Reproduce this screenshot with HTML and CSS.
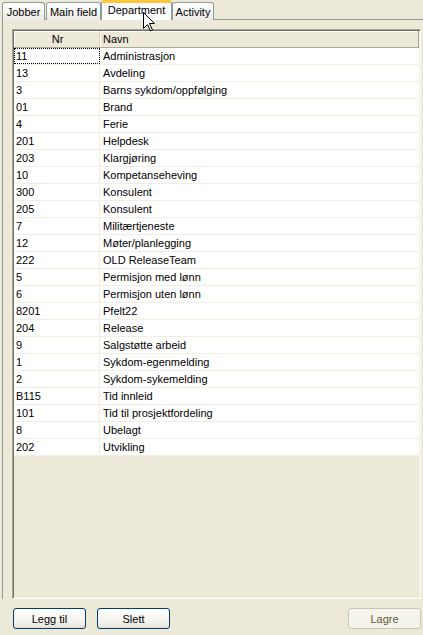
FILE: index.html
```html
<!DOCTYPE html>
<html>
<head>
<meta charset="utf-8">
<link rel="stylesheet" href="styles.css">
</head>
<body>
<div class="page">
  <div class="tabs">
    <div class="tab w-jobber">Jobber</div>
    <div class="tab w-main">Main field</div>
    <div class="tab active w-dept">Department</div>
    <div class="tab w-act">Activity</div>
  </div>
  <div class="panel">
    <div class="grid">
      <div class="row head">
        <div class="c1 hc">Nr</div>
        <div class="c2 hc">Navn</div>
      </div>
      <div class="row"><div class="c1 focus">11</div><div class="c2">Administrasjon</div></div>
      <div class="row"><div class="c1">13</div><div class="c2">Avdeling</div></div>
      <div class="row"><div class="c1">3</div><div class="c2">Barns sykdom/oppfølging</div></div>
      <div class="row"><div class="c1">01</div><div class="c2">Brand</div></div>
      <div class="row"><div class="c1">4</div><div class="c2">Ferie</div></div>
      <div class="row"><div class="c1">201</div><div class="c2">Helpdesk</div></div>
      <div class="row"><div class="c1">203</div><div class="c2">Klargjøring</div></div>
      <div class="row"><div class="c1">10</div><div class="c2">Kompetanseheving</div></div>
      <div class="row"><div class="c1">300</div><div class="c2">Konsulent</div></div>
      <div class="row"><div class="c1">205</div><div class="c2">Konsulent</div></div>
      <div class="row"><div class="c1">7</div><div class="c2">Militærtjeneste</div></div>
      <div class="row"><div class="c1">12</div><div class="c2">Møter/planlegging</div></div>
      <div class="row"><div class="c1">222</div><div class="c2">OLD ReleaseTeam</div></div>
      <div class="row"><div class="c1">5</div><div class="c2">Permisjon med lønn</div></div>
      <div class="row"><div class="c1">6</div><div class="c2">Permisjon uten lønn</div></div>
      <div class="row"><div class="c1">8201</div><div class="c2">Pfelt22</div></div>
      <div class="row"><div class="c1">204</div><div class="c2">Release</div></div>
      <div class="row"><div class="c1">9</div><div class="c2">Salgstøtte arbeid</div></div>
      <div class="row"><div class="c1">1</div><div class="c2">Sykdom-egenmelding</div></div>
      <div class="row"><div class="c1">2</div><div class="c2">Sykdom-sykemelding</div></div>
      <div class="row"><div class="c1">B115</div><div class="c2">Tid innleid</div></div>
      <div class="row"><div class="c1">101</div><div class="c2">Tid til prosjektfordeling</div></div>
      <div class="row"><div class="c1">8</div><div class="c2">Ubelagt</div></div>
      <div class="row"><div class="c1">202</div><div class="c2">Utvikling</div></div>
    </div>
  </div>
  <div class="buttons">
    <button class="btn">Legg til</button>
    <button class="btn">Slett</button>
    <span class="spacer"></span>
    <button class="btn disabled">Lagre</button>
  </div>
  <svg class="cursor" width="13" height="20" viewBox="0 0 13 20">
    <path d="M0.5 0.5 L0.5 16.5 L4.5 12.5 L7.5 19 L9.5 18 L6.5 11.5 L11.5 11.5 Z" fill="#fff" stroke="#000" stroke-width="1"/>
  </svg>
</div>
</body>
</html>
```
FILE: styles.css
```css
html, body {
  margin: 0;
  padding: 0;
  background: #ECE9D8;
  font-family: "Liberation Sans", Arial, sans-serif;
  font-size: 11px;
  color: #000;
}
.page {
  position: relative;
  width: 423px;
  height: 635px;
  overflow: hidden;
}
.tabs {
  display: flex;
  align-items: flex-end;
  height: 20px;
  padding-left: 2px;
  position: relative;
  z-index: 2;
}
.tab {
  box-sizing: border-box;
  height: 18px;
  border: 1px solid #919B9C;
  border-bottom: none;
  border-radius: 3px 3px 0 0;
  background: linear-gradient(#FFFFFF, #ECEBE6);
  display: flex;
  align-items: center;
  justify-content: center;
  margin-right: 1px;
  padding-top: 0;
}
.w-jobber { width: 43px; }
.w-main { width: 55px; }
.w-dept { width: 71px; }
.w-act { width: 42px; }
.tab.active {
  height: 20px;
  background: #FCFCFE;
  border-top: 3px solid #FFC83C;
  border-left-color: #919B9C;
  border-right-color: #919B9C;
  margin-left: -1px;
  margin-right: 0;
  padding-top: 0;
  padding-bottom: 4px;
}
.panel {
  margin-left: 2px;
  margin-top: -1px;
  border-top: 1px solid #919B9C;
  border-left: 1px solid #919B9C;
  padding: 9px 2px 0 9px;
  background: #ECE9D8;
}
.grid {
  box-sizing: border-box;
  height: 570px;
  border-top: 1px solid #ACA899;
  border-left: 1px solid #ACA899;
  border-right: 1px solid #FFFFFF;
  border-bottom: 1px solid #FFFFFF;
  box-shadow: inset 1px 1px 0 #716F64, inset -1px -1px 0 #F1EFE2;
  padding: 1px;
  display: flex;
  flex-direction: column;
}
.row {
  display: flex;
  height: 17px;
  box-sizing: border-box;
  background: #FFFFFF;
  border-bottom: 1px solid #F1EEE2;
}
.row.head {
  background: #ECE9D8;
  border-bottom: 1px solid #ACA899;
  height: 17px;
}
.c1, .c2 {
  box-sizing: border-box;
  display: flex;
  align-items: center;
  white-space: nowrap;
}
.c1 {
  width: 86px;
  padding-left: 2px;
  border-right: 1px solid #F1EEE2;
}
.c2 {
  flex: 1;
  padding-left: 3px;
}
.hc.c1 {
  justify-content: center;
  border-right: 1px solid #D6D2C2;
  box-shadow: inset 1px 1px 0 #FFFFFF;
}
.hc.c2 {
  border-right: 1px solid #ACA899;
  box-shadow: inset 1px 1px 0 #FFFFFF;
}
.focus {
  outline: 1px dotted #000;
  outline-offset: -1px;
}
.buttons {
  display: flex;
  align-items: center;
  padding: 9px 2px 0 13px;
  gap: 11px;
}
.spacer { flex: 1; }
.btn {
  box-sizing: border-box;
  width: 73px;
  height: 21px;
  border: 1px solid #003C74;
  border-radius: 3px;
  background: linear-gradient(#FFFFFF, #F3F2EC 70%, #E3E1D6);
  font-family: "Liberation Sans", Arial, sans-serif;
  font-size: 11px;
  color: #000;
  padding: 0;
}
.btn.disabled {
  border-color: #C9C7BA;
  background: #F5F4EA;
  color: #5E5A36;
}
.cursor {
  position: absolute;
  left: 143px;
  top: 12px;
  z-index: 5;
}
```
